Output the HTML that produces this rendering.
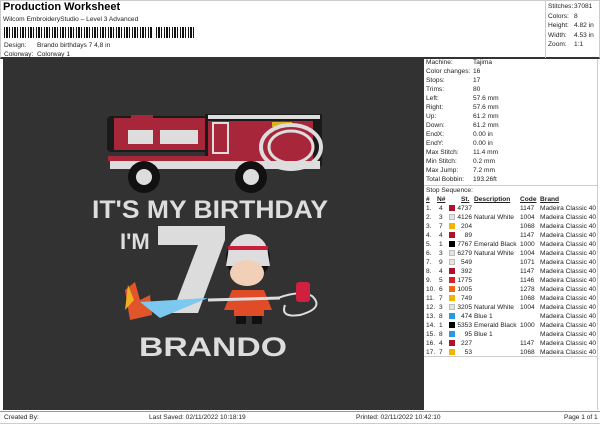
<!DOCTYPE html>
<html><head><meta charset="utf-8"><style>
*{margin:0;padding:0;box-sizing:border-box}
body{width:600px;height:424px;background:#fff;font-family:"Liberation Sans",Arial,sans-serif;color:#222;position:relative;overflow:hidden}
.a{position:absolute;white-space:nowrap}
.s{font-size:6.6px;line-height:9px}
.sw{display:inline-block;width:6px;height:6px;vertical-align:-1px}
</style></head><body>
<div class="a" style="left:3px;top:1px;font-size:11px;font-weight:bold;color:#000">Production Worksheet</div>
<div class="a s" style="left:3px;top:15px">Wilcom EmbroideryStudio – Level 3 Advanced</div>
<div class="a" style="left:4px;top:27px;width:190px;height:11px;background:repeating-linear-gradient(90deg,#111 0 1px,#fff 1px 2px,#111 2px 3px,#111 3px 4px,#fff 4px 5px,#111 5px 6px,#fff 6px 7px,#fff 7px 8px)"></div>
<div class="a" style="left:152px;top:27px;width:4px;height:13px;background:#fff"></div>
<div class="a s" style="left:4px;top:41px">Design:</div>
<div class="a s" style="left:37px;top:41px">Brando birthdays 7 4,8 in</div>
<div class="a s" style="left:4px;top:50px">Colorway:</div>
<div class="a s" style="left:37px;top:50px">Colorway 1</div>
<div class="a" style="left:0;top:0;width:600px;height:59px;border:1px solid #ccc;border-bottom:2px solid #333"></div>
<div class="a" style="left:545px;top:0;width:54px;height:58px;border-left:1px solid #ccc"></div>
<div class="a s" style="left:548px;top:2px;line-height:9.5px">Stitches:<br>Colors:<br>Height:<br>Width:<br>Zoom:</div>
<div class="a s" style="left:574px;top:2px;line-height:9.5px">37081<br>8<br>4.82 in<br>4.53 in<br>1:1</div>

<div class="a" style="left:3px;top:59px;width:421px;height:351px;background:#323232"></div>
<div class="a" style="left:424px;top:59px;width:174px;height:351px;border-right:1px solid #ccc"></div>

<div class="a s" style="left:426px;top:58px">Machine:<br>Color changes:<br>Stops:<br>Trims:<br>Left:<br>Right:<br>Up:<br>Down:<br>EndX:<br>EndY:<br>Max Stitch:<br>Min Stitch:<br>Max Jump:<br>Total Bobbin:</div>
<div class="a s" style="left:473px;top:58px">Tajima<br>16<br>17<br>80<br>57.6 mm<br>57.6 mm<br>61.2 mm<br>61.2 mm<br>0.00 in<br>0.00 in<br>11.4 mm<br>0.2 mm<br>7.2 mm<br>193.26ft</div>
<div class="a" style="left:424px;top:185px;width:174px;border-top:1px solid #ccc"></div>
<div class="a s" style="left:426px;top:186px">Stop Sequence:</div>
<div class="a s" style="left:426px;top:195px;font-weight:bold;text-decoration:underline">#</div>
<div class="a s" style="left:437px;top:195px;font-weight:bold;text-decoration:underline">N#</div>
<div class="a s" style="left:461px;top:195px;font-weight:bold;text-decoration:underline">St.</div>
<div class="a s" style="left:474px;top:195px;font-weight:bold;text-decoration:underline">Description</div>
<div class="a s" style="left:520px;top:195px;font-weight:bold;text-decoration:underline">Code</div>
<div class="a s" style="left:540px;top:195px;font-weight:bold;text-decoration:underline">Brand</div>
<div class="a s" style="left:426px;top:204px">1.<br>2.<br>3.<br>4.<br>5.<br>6.<br>7.<br>8.<br>9.<br>10.<br>11.<br>12.<br>13.<br>14.<br>15.<br>16.<br>17.</div>
<div class="a s" style="left:439px;top:204px">4<br>3<br>7<br>4<br>1<br>3<br>9<br>4<br>5<br>6<br>7<br>3<br>8<br>1<br>8<br>4<br>7</div>
<div class="a s" style="left:449px;top:204px;line-height:9px">
<span class="sw" style="background:#b0102a"></span><br><span class="sw" style="background:#e4e4e4;border:1px solid #bbb"></span><br><span class="sw" style="background:#f5b300"></span><br><span class="sw" style="background:#b0102a"></span><br><span class="sw" style="background:#000"></span><br><span class="sw" style="background:#e4e4e4;border:1px solid #bbb"></span><br><span class="sw" style="background:#e8e4da;border:1px solid #bbb"></span><br><span class="sw" style="background:#b0102a"></span><br><span class="sw" style="background:#d9212b"></span><br><span class="sw" style="background:#f06a10"></span><br><span class="sw" style="background:#f5b300"></span><br><span class="sw" style="background:#e4e4e4;border:1px solid #bbb"></span><br><span class="sw" style="background:#2898e0"></span><br><span class="sw" style="background:#000"></span><br><span class="sw" style="background:#2898e0"></span><br><span class="sw" style="background:#b0102a"></span><br><span class="sw" style="background:#f5b300"></span></div>
<div class="a s" style="left:456px;top:204px;width:16px;text-align:right">4737<br>4126<br>204<br>89<br>7767<br>6279<br>549<br>392<br>1775<br>1005<br>749<br>3205<br>474<br>5353<br>95<br>227<br>53</div>
<div class="a s" style="left:474px;top:204px">&nbsp;<br>Natural White<br>&nbsp;<br>&nbsp;<br>Emerald Black<br>Natural White<br>&nbsp;<br>&nbsp;<br>&nbsp;<br>&nbsp;<br>&nbsp;<br>Natural White<br>Blue 1<br>Emerald Black<br>Blue 1<br>&nbsp;<br>&nbsp;</div>
<div class="a s" style="left:520px;top:204px">1147<br>1004<br>1068<br>1147<br>1000<br>1004<br>1071<br>1147<br>1146<br>1278<br>1068<br>1004<br>&nbsp;<br>1000<br>&nbsp;<br>1147<br>1068</div>
<div class="a s" style="left:540px;top:204px">Madeira Classic 40<br>Madeira Classic 40<br>Madeira Classic 40<br>Madeira Classic 40<br>Madeira Classic 40<br>Madeira Classic 40<br>Madeira Classic 40<br>Madeira Classic 40<br>Madeira Classic 40<br>Madeira Classic 40<br>Madeira Classic 40<br>Madeira Classic 40<br>Madeira Classic 40<br>Madeira Classic 40<br>Madeira Classic 40<br>Madeira Classic 40<br>Madeira Classic 40</div>
<div class="a" style="left:424px;top:356px;width:174px;border-top:1px solid #ccc"></div>

<div class="a" style="left:0;top:411px;width:600px;height:13px;border-top:1px solid #999;border-bottom:1px solid #ccc"></div>
<div class="a s" style="left:4px;top:413px">Created By:</div>
<div class="a s" style="left:149px;top:413px">Last Saved: 02/11/2022 10:18:19</div>
<div class="a s" style="left:356px;top:413px">Printed: 02/11/2022 10:42:10</div>
<div class="a s" style="left:564px;top:413px">Page 1 of 1</div>

<svg class="a" style="left:0;top:0" width="600" height="424">
<g>
<rect x="107" y="116" width="120" height="36" rx="4" fill="#1a1a1a"/>
<rect x="114" y="118" width="110" height="32" fill="#a8263a"/>
<rect x="131" y="115" width="22" height="5" fill="#a8263a"/>
<rect x="128" y="130" width="25" height="14" fill="#ddd"/>
<rect x="160" y="130" width="38" height="14" fill="#ddd"/>
<rect x="205" y="114" width="117" height="52" fill="#1a1a1a"/>
<rect x="208" y="115" width="112" height="4" fill="#ddd"/>
<rect x="208" y="121" width="105" height="42" fill="#a8263a"/>
<rect x="213" y="123" width="15" height="30" fill="none" stroke="#ddd" stroke-width="2"/>
<rect x="272" y="122" width="20" height="5" fill="#e0b020"/>
<ellipse cx="291" cy="147" rx="30" ry="22" fill="none" stroke="#ddd" stroke-width="4"/>
<ellipse cx="291" cy="147" rx="22" ry="16" fill="none" stroke="#ddd" stroke-width="3"/>
<rect x="110" y="161" width="210" height="8" fill="#ddd"/>
<rect x="108" y="156" width="140" height="5" fill="#a8263a"/>
<circle cx="144" cy="177" r="16" fill="#111"/><circle cx="144" cy="177" r="8" fill="#ddd"/>
<circle cx="251" cy="177" r="16" fill="#111"/><circle cx="251" cy="177" r="8" fill="#ddd"/>
</g>
<text x="210" y="218" font-family="Liberation Sans" font-weight="bold" font-size="25" fill="#ddd" text-anchor="middle" textLength="236" lengthAdjust="spacingAndGlyphs">IT'S MY BIRTHDAY</text>
<text x="120" y="249" font-family="Liberation Sans" font-weight="bold" font-size="22" fill="#ddd">I'M</text>
<path d="M158 226 H225 V240 L198 313 H172 L198 245 H158 Z" fill="#dcdcdc"/>
<circle cx="248" cy="258" r="22" fill="#111"/>
<path d="M228 254 A20 20 0 0 1 268 254 L270 266 L226 266 Z" fill="#ddd"/>
<rect x="228" y="246" width="40" height="4" fill="#c8203a"/>
<ellipse cx="247" cy="273" rx="17" ry="13" fill="#f2d0b8"/>
<path d="M232 290 h32 l8 20 h-48 z" fill="#e04b28"/>
<rect x="234" y="304" width="30" height="12" fill="#e04b28"/>
<rect x="236" y="316" width="10" height="8" fill="#111"/><rect x="252" y="316" width="10" height="8" fill="#111"/>
<path d="M208 300 L280 298" stroke="#ddd" stroke-width="3"/>
<path d="M278 298 Q300 290 312 296 Q325 308 300 315 Q280 318 285 305" fill="none" stroke="#ddd" stroke-width="2"/>
<rect x="296" y="282" width="14" height="20" rx="3" fill="#d02040"/>
<path d="M125 290 L135 282 L140 300 L150 295 L152 315 L130 320 Z" fill="#e0562a"/>
<path d="M128 285 L134 300 L125 310 Z" fill="#f0b020"/>
<path d="M140 302 L208 298 L160 318 Z" fill="#7cc8ee"/>
<text x="213" y="356" font-family="Liberation Sans" font-weight="bold" font-size="27" fill="#ddd" text-anchor="middle" textLength="148" lengthAdjust="spacingAndGlyphs">BRANDO</text>
</svg>
</body></html>
